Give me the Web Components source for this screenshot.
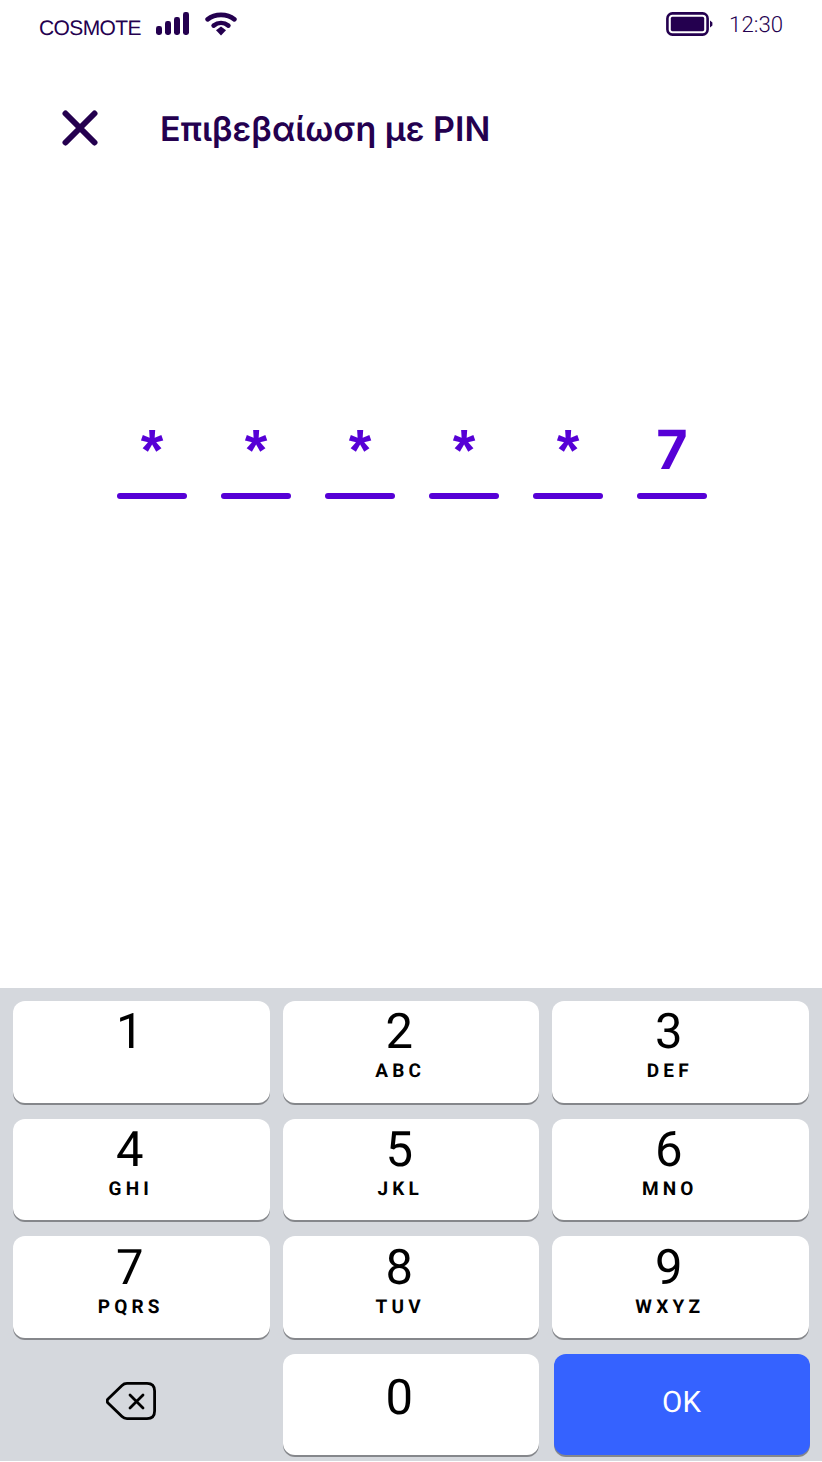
<!DOCTYPE html>
<html>
<head>
<meta charset="utf-8">
<style>
  html, body { margin: 0; padding: 0; background: #fff; }
  body { width: 822px; height: 1462px; overflow: hidden; display: flex; flex-direction: column; font-family: Roboto, sans-serif; text-rendering: geometricPrecision; }
</style>
</head>
<body>
<status-bar></status-bar>
<title-bar>Επιβεβαίωση με PIN</title-bar>
<pin-row value="*****7"></pin-row>
<num-pad>
  <pad-key num="1"></pad-key>
  <pad-key num="2" letters="ABC"></pad-key>
  <pad-key num="3" letters="DEF"></pad-key>
  <pad-key num="4" letters="GHI"></pad-key>
  <pad-key num="5" letters="JKL"></pad-key>
  <pad-key num="6" letters="MNO"></pad-key>
  <pad-key num="7" letters="PQRS"></pad-key>
  <pad-key num="8" letters="TUV"></pad-key>
  <pad-key num="9" letters="WXYZ"></pad-key>
  <back-key></back-key>
  <pad-key num="0"></pad-key>
  <ok-key>OK</ok-key>
</num-pad>

<script>
class StatusBar extends HTMLElement {
  constructor() {
    super();
    this.attachShadow({ mode: "open" });
  }
  connectedCallback() {
    this.shadowRoot.innerHTML = `
    <style>
      :host { display: flex; align-items: flex-start; height: 60px; padding: 0 39px; color: #24004f; font-family: "Liberation Sans", sans-serif; }
      .name { font-size: 21px; line-height: 24px; margin-top: 17px; letter-spacing: -0.6px; }
      .signal { margin: 12px 0 0 14px; }
      .wifi { margin: 11px 0 0 15px; }
      .right { margin-left: auto; display: flex; align-items: flex-start; }
      .batt { margin: 12px 0 0 0; }
      .time { font-family: Roboto, sans-serif; font-weight: 300; font-size: 22.2px; line-height: 26px; margin: 12px 0 0 16.5px; }
    </style>
    <span class="name">COSMOTE</span>
    <svg class="signal" width="35" height="24" viewBox="0 0 35 24" fill="#24004f">
      <rect x="1" y="14" width="6" height="9" rx="2.4"/>
      <rect x="10" y="9" width="6" height="14" rx="2.4"/>
      <rect x="19" y="5" width="6" height="18" rx="2.4"/>
      <rect x="28" y="0" width="6" height="23" rx="2.4"/>
    </svg>
    <svg class="wifi" width="32" height="26" viewBox="0 0 32 26" fill="none" stroke="#24004f" stroke-width="4.6" stroke-linecap="round">
      <path d="M2.6 8.4 C10 2.4 22 2.4 29.4 8.4"/>
      <path d="M8.6 14.6 C13 11.2 19 11.2 23.4 14.6"/>
      <path d="M11 19.2 L16 15.4 L21 19.2 L16 24.6 Z" fill="#24004f" stroke="none"/>
    </svg>
    <div class="right">
      <svg class="batt" width="47" height="24" viewBox="0 0 47 24">
        <rect x="1.4" y="1.4" width="40.2" height="21.2" rx="5" fill="none" stroke="#24004f" stroke-width="2.6"/>
        <rect x="4.8" y="4.8" width="33.4" height="14.4" rx="1.6" fill="#24004f"/>
        <path d="M44 8.5 L46.4 10.5 L46.4 13.5 L44 15.5 Z" fill="#24004f"/>
      </svg>
      <span class="time">12:30</span>
    </div>`;
  }
}

class TitleBar extends HTMLElement {
  constructor() {
    super();
    this.attachShadow({ mode: "open" });
  }
  connectedCallback() {
    this.shadowRoot.innerHTML = `
    <style>
      :host { display: flex; align-items: center; height: 140px; padding-left: 62px; color: #24004f; box-sizing: border-box; }
      svg { flex: none; margin-bottom: 5px; }
      .text { margin-left: 62px; font-family: Inter, sans-serif; font-weight: 600; font-size: 34px; line-height: 40px; }
    </style>
    <svg width="36" height="36" viewBox="0 0 36 36" stroke="#24004f" stroke-width="6" stroke-linecap="round">
      <path d="M3.5 3.5 L32.5 32.5 M32.5 3.5 L3.5 32.5"/>
    </svg>
    <span class="text"><slot></slot></span>`;
  }
}

class PinRow extends HTMLElement {
  constructor() {
    super();
    this.attachShadow({ mode: "open" });
  }
  connectedCallback() {
    const cells = [...this.getAttribute("value")].map(c => `<div class="cell"><span class="ch ${c === "*" ? "star" : ""}">${c}</span><i></i></div>`).join("");
    this.shadowRoot.innerHTML = `
    <style>
      :host { display: flex; justify-content: center; gap: 34px; height: 788px; padding: 214px 0 0 2px; box-sizing: border-box; color: #5600d6; }
      .cell { width: 70px; display: flex; flex-direction: column; align-items: center; }
      .ch { font-family: Inter, sans-serif; font-weight: 700; font-size: 54px; line-height: 66px; height: 79px; margin-top: 4px; margin-bottom: -4px; }
      .star { font-family: "Liberation Sans", sans-serif; font-size: 58px; }
      i { display: block; width: 70px; height: 6px; border-radius: 3px; background: #5600d6; }
    </style>
    ${cells}`;
  }
}

class NumPad extends HTMLElement {
  constructor() {
    super();
    this.attachShadow({ mode: "open" }).innerHTML = `
    <style>
      :host { display: grid; grid-template-columns: repeat(3, 256.5px); grid-auto-rows: 101.5px; column-gap: 13px; row-gap: 16px; height: 473px; box-sizing: border-box; padding: 13px 13px 0; background: #d5d8dd; }
    </style>
    <slot></slot>`;
  }
}

class PadKey extends HTMLElement {
  constructor() {
    super();
    this.attachShadow({ mode: "open" });
  }
  connectedCallback() {
    const num = this.getAttribute("num");
    // bottom rows sit a pixel lower in their key, the 0 has no letters and drops further
    const top = num === "0" ? 15 : num >= "7" ? 3 : 2;
    this.shadowRoot.innerHTML = `
    <style>
      :host { display: flex; flex-direction: column; align-items: center; box-sizing: border-box; padding-right: 23px; background: #fff; border-radius: 12px; box-shadow: 0 2px 0 #85878b; color: #000; font-family: Roboto, sans-serif; }
      .num { font-size: 49px; line-height: 58px; height: 58px; margin-top: ${top}px; }
      .let { font-weight: 700; font-size: 19px; line-height: 22px; letter-spacing: 4.2px; margin-top: -1px; margin-right: -2px; }
    </style>
    <span class="num">${num}</span>
    <span class="let">${this.getAttribute("letters") || ""}</span>`;
  }
}

class BackKey extends HTMLElement {
  constructor() {
    super();
    this.attachShadow({ mode: "open" }).innerHTML = `
    <style>
      :host { display: flex; align-items: center; justify-content: center; padding: 0 20px 7px 0; box-sizing: border-box; }
    </style>
    <svg width="50" height="40" viewBox="0 0 50 40" fill="none" stroke="#000" stroke-width="2.8" stroke-linecap="round" stroke-linejoin="round">
      <path d="M2 18 L16 4.4 Q18 2.4 21 2.4 L41 2.4 Q48.6 2.4 48.6 10 L48.6 30 Q48.6 37.6 41 37.6 L21 37.6 Q18 37.6 16 35.6 L2 22 Q0.2 20 2 18 Z"/>
      <path d="M24 14 L37 27 M37 14 L24 27"/>
    </svg>`;
  }
}

class OkKey extends HTMLElement {
  constructor() {
    super();
    this.attachShadow({ mode: "open" }).innerHTML = `
    <style>
      :host { display: flex; align-items: center; justify-content: center; margin: 0 -1px 0 1.5px; padding-bottom: 3px; box-sizing: border-box; background: #3562ff; border-radius: 12px; box-shadow: 0 2px 0 #85878b; color: #fff; font-family: Roboto, sans-serif; font-size: 29.5px; }
    </style>
    <slot></slot>`;
  }
}

customElements.define("status-bar", StatusBar);
customElements.define("title-bar", TitleBar);
customElements.define("pin-row", PinRow);
customElements.define("num-pad", NumPad);
customElements.define("pad-key", PadKey);
customElements.define("back-key", BackKey);
customElements.define("ok-key", OkKey);
</script>
</body>
</html>
